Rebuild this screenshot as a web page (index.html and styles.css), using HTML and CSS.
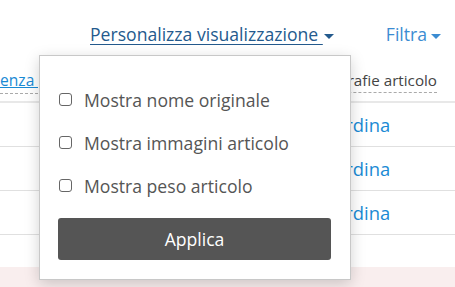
FILE: index.html
```html
<!DOCTYPE html>
<html lang="it">
<head>
    <meta charset="UTF-8">
    <meta name="viewport" content="width=device-width, initial-scale=1.0">
    <title>Articoli</title>
    <link rel="stylesheet" href="styles.css">
</head>
<body>

<!-- Toolbar -->
<div class="toolbar">
    <a href="#" class="toolbar-link toolbar-link-main">Personalizza visualizzazione <span class="caret"></span></a>
    <a href="#" class="toolbar-link toolbar-link-filter">Filtra<span class="caret"></span></a>
</div>

<!-- Articles table -->
<div class="table">
    <div class="table-head">
        <div class="head-cell"><a href="#" class="head-link">enza prodotto</a></div>
        <div class="head-cell head-cell-right"><span class="head-label">Fotografie articolo</span></div>
    </div>
    <div class="table-row"><div></div><a href="#" class="row-link">Ordina</a></div>
    <div class="table-row"><div></div><a href="#" class="row-link">Ordina</a></div>
    <div class="table-row"><div></div><a href="#" class="row-link">Ordina</a></div>
    <div class="table-row table-row-empty"></div>
    <div class="table-row table-row-alert"></div>
</div>

<!-- View options menu -->
<div class="view-menu">
    <label class="view-option"><input type="checkbox"><span class="check"></span>Mostra nome originale</label>
    <label class="view-option"><input type="checkbox"><span class="check"></span>Mostra immagini articolo</label>
    <label class="view-option"><input type="checkbox"><span class="check"></span>Mostra peso articolo</label>
    <button class="apply-button">Applica</button>
</div>

</body>
</html>
```

FILE: styles.css
```css
body {
    font-family: "Open Sans", "Liberation Sans", sans-serif;
    margin: 0;
    padding: 0;
    background-color: #fff;
    overflow: hidden;
}
a {
    text-decoration: none;
}
.toolbar {
    display: flex;
    justify-content: flex-end;
    align-items: center;
    gap: 52px;
    height: 56px;
    padding: 12px 14px 0 0;
    box-sizing: border-box;
}
.toolbar-link {
    font-size: 17.6px;
    white-space: nowrap;
}
.toolbar-link-main {
    color: #245a8d;
    text-decoration: underline;
    text-underline-offset: 3px;
}
.toolbar-link-filter {
    color: #3b8cd2;
}
.caret {
    display: inline-block;
    width: 0;
    height: 0;
    margin-left: 1px;
    vertical-align: middle;
    border-left: 5px solid transparent;
    border-right: 5px solid transparent;
    border-top: 5px solid currentColor;
}
.toolbar-link-filter .caret {
    margin-left: 4px;
}
.table-head {
    display: grid;
    grid-template-columns: 1fr 1fr;
    height: 45px;
    border-bottom: 2px solid #e8e8e8;
    font-size: 15.6px;
}
.head-cell {
    display: flex;
    align-items: center;
    padding-top: 6px;
}
.head-cell-right {
    justify-content: flex-end;
    padding-right: 18px;
    font-size: 15.2px;
}
.head-link {
    color: #1a8ad4;
    text-decoration: underline;
    border-bottom: 1px dashed #aaa;
    padding-bottom: 2px;
}
.head-label {
    color: #444;
    border-bottom: 1px dashed #aaa;
    padding-bottom: 2px;
}
.table-row {
    display: grid;
    grid-template-columns: 331px 1fr;
    align-items: center;
    height: 43px;
    border-bottom: 1px solid #e0e0e0;
}
.row-link {
    color: #1a8ad4;
    font-size: 18.4px;
}
.table-row-empty {
    height: 32px;
    border-bottom: none;
}
.table-row-alert {
    height: 21px;
    border-bottom: none;
    background-color: #f9eeee;
}
.view-menu {
    position: absolute;
    left: 39px;
    top: 55px;
    width: 273px;
    padding: 22px 19px 19px 18px;
    background-color: #fff;
    border: 1px solid #c8c8c8;
    box-shadow: 0 4px 14px rgba(0, 0, 0, 0.18);
}
.view-option {
    display: flex;
    align-items: center;
    height: 43px;
    font-size: 17.6px;
    color: #555;
    cursor: pointer;
}
.view-option input {
    display: none;
}
.check {
    width: 11px;
    height: 11px;
    margin: 0 12px 0 1px;
    border: 1.5px solid #666;
    border-radius: 3px;
}
.apply-button {
    display: block;
    width: 100%;
    height: 42px;
    margin-top: 11px;
    background-color: #555;
    color: #fff;
    border: none;
    border-radius: 3px;
    font-family: inherit;
    font-size: 17.6px;
}
```
